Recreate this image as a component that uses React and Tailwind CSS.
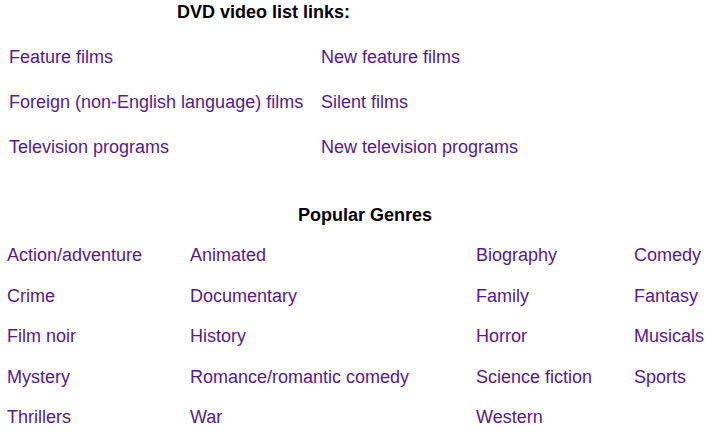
const DVD_LINKS = [
  ['Feature films', 'New feature films'],
  ['Foreign (non-English language) films', 'Silent films'],
  ['Television programs', 'New television programs'],
];

const GENRES = [
  ['Action/adventure', 'Animated', 'Biography', 'Comedy'],
  ['Crime', 'Documentary', 'Family', 'Fantasy'],
  ['Film noir', 'History', 'Horror', 'Musicals'],
  ['Mystery', 'Romance/romantic comedy', 'Science fiction', 'Sports'],
  ['Thrillers', 'War', 'Western', ''],
];

export default function App() {
  return (
    <div
      className="w-[713px] h-[440px] overflow-hidden bg-white text-black"
      style={{ fontFamily: '"Liberation Sans", Arial, sans-serif' }}
    >
      {/* DVD list links */}
      <div className="w-[527px] pt-[2px]">
        <h2 className="text-center text-[18px] font-bold leading-[20px]">DVD video list links:</h2>
        <div className="mt-[25px] grid grid-cols-[312px_1fr] gap-y-[25px] pl-[9px]">
          {DVD_LINKS.map((row, i) =>
            row.map((label, j) => (
              <a key={`${i}-${j}`} href="#" className="text-[18px] leading-[20px] text-[#551a8b] whitespace-nowrap">
                {label}
              </a>
            ))
          )}
        </div>
      </div>

      {/* Popular genres */}
      <div className="mt-[48px]">
        <h2 className="w-[730px] text-center text-[18px] font-bold leading-[20px]">Popular Genres</h2>
        <div className="mt-[20px] grid grid-cols-[183px_286px_158px_1fr] gap-y-[20.5px] pl-[7px]">
          {GENRES.map((row, i) =>
            row.map((label, j) => (
              <a key={`${i}-${j}`} href="#" className="text-[18px] leading-[20px] text-[#551a8b] whitespace-nowrap">
                {label}
              </a>
            ))
          )}
        </div>
      </div>
    </div>
  );
}
